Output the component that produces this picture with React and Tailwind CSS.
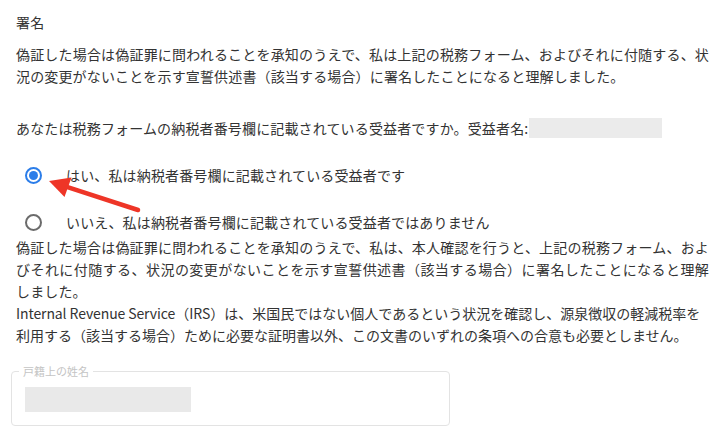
import React from "react";

const jp = { fontFamily: '"Noto Sans CJK JP", "Noto Sans", sans-serif' };

const Radio = ({ checked }) => (
  <span
    className={
      "flex h-[17px] w-[17px] shrink-0 items-center justify-center rounded-full border-2 " +
      (checked ? "border-[#2b7de9]" : "border-[#6b6b6b]")
    }
  >
    {checked && <span className="h-[9px] w-[9px] rounded-full bg-[#2b7de9]" />}
  </span>
);

const App = () => {
  return (
    <div
      className="relative w-[725px] h-[438px] overflow-hidden bg-white px-4 pt-[11px] text-[14px] leading-[22px] tracking-[0.15px] text-[#333]"
      style={jp}
    >
      <p>署名</p>

      <p className="mt-[10px] text-justify">
        偽証した場合は偽証罪に問われることを承知のうえで、私は上記の税務フォーム、およびそれに付随する、状況の変更がないことを示す宣誓供述書（該当する場合）に署名したことになると理解しました。
      </p>

      <div className="mt-[30px] flex items-center">
        <span>あなたは税務フォームの納税者番号欄に記載されている受益者ですか。受益者名:</span>
        <span className="ml-[1px] h-[20px] w-[133px] bg-[#ebebeb]" />
      </div>

      <div className="mt-[25px] flex flex-col gap-[25px]">
        <label className="flex items-center">
          <span className="ml-[9px] w-[41px]">
            <Radio checked />
          </span>
          <span>はい、私は納税者番号欄に記載されている受益者です</span>
        </label>
        <label className="flex items-center">
          <span className="ml-[9px] w-[41px]">
            <Radio />
          </span>
          <span>いいえ、私は納税者番号欄に記載されている受益者ではありません</span>
        </label>
      </div>

      <div className="mt-[3px] text-justify">
        <p>
          偽証した場合は偽証罪に問われることを承知のうえで、私は、本人確認を行うと、上記の税務フォーム、およびそれに付随する、状況の変更がないことを示す宣誓供述書（該当する場合）に署名したことになると理解しました。
        </p>
        <p className="tracking-normal">
          <span className="tracking-[-0.1px]">Internal Revenue Service</span>（IRS）は、米国民ではない個人であるという状況を確認し、源泉徴収の軽減税率を
          <br />
          利用する（該当する場合）ために必要な証明書以外、この文書のいずれの条項への合意も必要としません。
        </p>
      </div>

      <fieldset className="mt-[18px] ml-[-5px] w-[439px] rounded-[4px] border border-[#e3e3e3] pl-[13px] pb-[13px] pt-[9px]">
        <legend className="ml-[-6px] px-[4px] text-[11px] leading-[14px] tracking-normal text-[#c4c4c4]">
          戸籍上の姓名
        </legend>
        <div className="h-[25px] w-[166px] bg-[#e9e9e9]" />
      </fieldset>

      {/* red arrow pointing to the selected radio */}
      <svg
        className="absolute left-0 top-0 pointer-events-none"
        width="725"
        height="438"
        viewBox="0 0 725 438"
      >
        <line x1="138" y1="210" x2="66" y2="186.6" stroke="#ee3527" strokeWidth="4.5" strokeLinecap="round" />
        <polygon points="49,181 71.5,177.5 64.5,197" fill="#ee3527" />
      </svg>
    </div>
  );
};

export default App;
